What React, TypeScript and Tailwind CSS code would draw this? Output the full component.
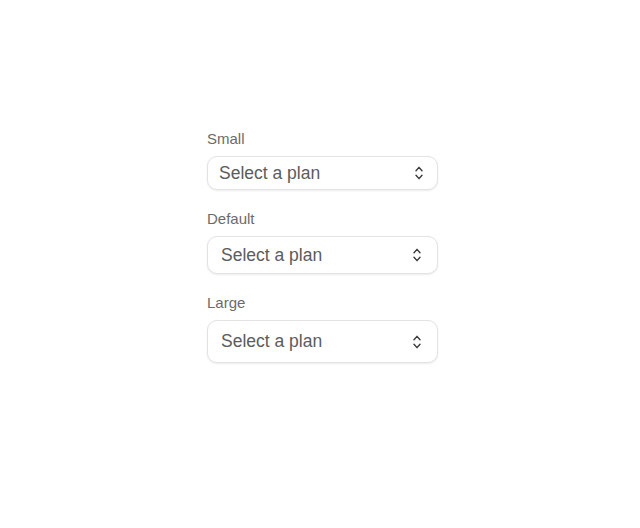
import { useState } from 'react';

type Size = 'small' | 'default' | 'large';

const sizes: Record<Size, { label: string; box: string }> = {
  small: { label: 'Small', box: 'h-[34px] pl-[11px] pr-[9px]' },
  default: { label: 'Default', box: 'h-[38px] pl-[13px] pr-[11px]' },
  large: { label: 'Large', box: 'h-[43px] pl-[13px] pr-[11px]' },
};

function UpDown() {
  return (
    <svg width="18" height="18" viewBox="0 0 24 24" fill="none" stroke="#3a3a3a" strokeWidth="1.9" strokeLinecap="round" strokeLinejoin="round">
      <path d="m8 15 4 4.5 4-4.5" />
      <path d="m8 9 4-4.5 4 4.5" />
    </svg>
  );
}

function PlanSelect({ size }: { size: Size }) {
  const [value] = useState<string | null>(null);
  const s = sizes[size];
  return (
    <div className="flex flex-col">
      <label className="text-[15px] leading-5 text-[#6b6b6b] mb-[7px]">{s.label}</label>
      <button
        type="button"
        className={`flex items-center justify-between w-full rounded-[10px] border border-[#e3e3e3] bg-white shadow-[0_1px_2px_rgba(0,0,0,0.08)] ${s.box}`}
      >
        <span className="text-[17.5px] text-[#5c5c5c]">{value ?? 'Select a plan'}</span>
        <UpDown />
      </button>
    </div>
  );
}

export default function App() {
  return (
    <div className="w-[640px] h-[528px] bg-white pl-[207px]" style={{ fontFamily: '"Liberation Sans", Arial, sans-serif' }}>
      <div className="w-[231px] pt-[129px] flex flex-col gap-[19px]">
        <PlanSelect size="small" />
        <PlanSelect size="default" />
        <PlanSelect size="large" />
      </div>
    </div>
  );
}
